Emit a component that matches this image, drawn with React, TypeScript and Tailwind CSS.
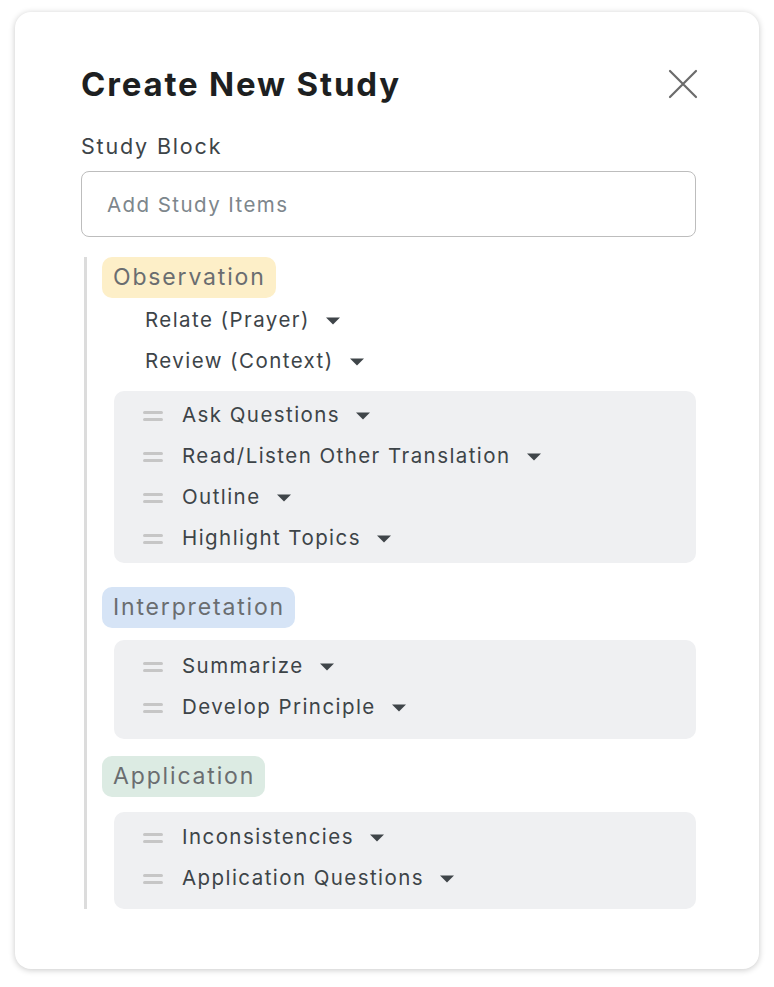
import { useState } from 'react';

type Item = { label: string };

const font = { fontFamily: 'Inter, "Noto Sans", sans-serif' };

function Caret() {
  return (
    <svg width="14" height="8" viewBox="0 0 14 8" className="ml-[16px] shrink-0">
      <path d="M0 0.5 L14 0.5 L7 7.5 Z" fill="#3f4549" />
    </svg>
  );
}

function Handle() {
  return (
    <span className="flex w-[20px] shrink-0 flex-col gap-[4px]">
      <span className="h-[3px] w-full rounded-sm bg-[#c6c6c6]" />
      <span className="h-[3px] w-full rounded-sm bg-[#c6c6c6]" />
    </span>
  );
}

function Row({ label, drag }: { label: string; drag?: boolean }) {
  return (
    <div className="flex h-[41px] items-center text-[20.5px] tracking-[0.07em] text-[#3d4448]">
      {drag && (
        <span className="mr-[19px]">
          <Handle />
        </span>
      )}
      <span>{label}</span>
      <Caret />
    </div>
  );
}

function Box({ items, className }: { items: Item[]; className: string }) {
  return (
    <div className={`ml-[12px] rounded-[10px] bg-[#eff0f2] pl-[29px] ${className}`}>
      {items.map((it) => (
        <Row key={it.label} label={it.label} drag />
      ))}
    </div>
  );
}

function Badge({ label, className }: { label: string; className: string }) {
  return (
    <div className={`inline-flex h-[41px] items-center rounded-[10px] pl-[11px] pr-[10px] text-[23px] tracking-[0.08em] text-[#6a6d70] ${className}`}>
      {label}
    </div>
  );
}

export default function App() {
  const [value, setValue] = useState('');

  return (
    <div className="min-h-screen bg-white pl-[15px] pt-[12px]" style={font}>
      <div className="w-[744px] rounded-[16px] bg-white pb-[60px] pl-[66px] pr-[63px] pt-[52px] shadow-[0_1px_6px_rgba(0,0,0,0.22)]">
        <div className="flex items-center justify-between">
          <h1 className="text-[33px] font-bold leading-[40px] tracking-[0.055em] text-[#1d1f21]">Create New Study</h1>
          <button className="mr-[-2px] text-[#6b6b6b]" aria-label="Close">
            <svg width="30" height="30" viewBox="0 0 30 30">
              <path d="M2 2 L28 28 M28 2 L2 28" stroke="currentColor" strokeWidth="2.2" strokeLinecap="round" />
            </svg>
          </button>
        </div>

        <div className="mt-[26px] text-[21.5px] leading-[32px] tracking-[0.085em] text-[#3d4448]">Study Block</div>

        <input
          value={value}
          onChange={(e) => setValue(e.target.value)}
          placeholder="Add Study Items"
          className="mt-[9px] h-[66px] w-full rounded-[8px] border-[1.5px] border-[#bdbdbd] px-[25px] text-[20.5px] tracking-[0.07em] text-[#3d4448] outline-none placeholder:text-[#7d868c]"
          style={font}
        />

        <div className="ml-[3px] mt-[20px] border-l-[3px] border-[#dcdcdc] pl-[15px]">
          <Badge label="Observation" className="bg-[#fdefc8]" />
          <div className="mt-[2px] pl-[43px]">
            <Row label="Relate (Prayer)" />
            <Row label="Review (Context)" />
          </div>
          <Box
            className="mt-[9px] pb-[4px] pt-[4px]"
            items={[
              { label: 'Ask Questions' },
              { label: 'Read/Listen Other Translation' },
              { label: 'Outline' },
              { label: 'Highlight Topics' },
            ]}
          />

          <Badge label="Interpretation" className="mt-[24px] bg-[#d6e4f6]" />
          <Box
            className="mt-[12px] pb-[11px] pt-[6px]"
            items={[{ label: 'Summarize' }, { label: 'Develop Principle' }]}
          />

          <Badge label="Application" className="mt-[17px] bg-[#dcebe3]" />
          <Box
            className="mt-[15px] pb-[10px] pt-[5px]"
            items={[{ label: 'Inconsistencies' }, { label: 'Application Questions' }]}
          />
        </div>
      </div>
    </div>
  );
}
